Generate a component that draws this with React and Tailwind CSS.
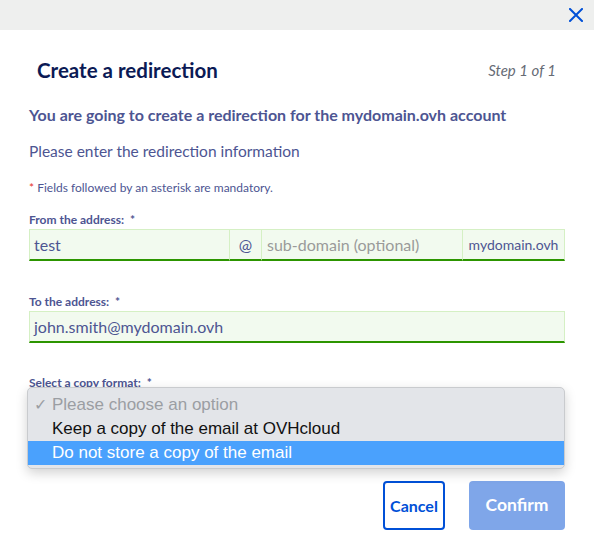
function Label({ children }) {
  return (
    <div className="text-[12px] font-bold text-[#4d5592] leading-[14px] mb-[2px] whitespace-pre">
      {children}:  *
    </div>
  );
}

function CloseIcon() {
  return (
    <svg width="14" height="14" viewBox="0 0 14 14" className="text-[#0050d7]">
      <path d="M1 1 L13 13 M13 1 L1 13" stroke="currentColor" strokeWidth="2" strokeLinecap="square" fill="none" />
    </svg>
  );
}

const seg = 'bg-[#f2faef] border border-[#d5f0c4] border-b-2 border-b-[#2c9500] flex items-center';

export default function App() {
  return (
    <div className="w-[594px] h-[551px] bg-white overflow-hidden font-['Lato','Noto_Sans',sans-serif]">
      <div className="h-[30px] bg-[#eeefee] flex justify-end items-center pr-[11px]">
        <CloseIcon />
      </div>

      <div className="px-[29px]">
        <div className="flex items-center justify-between pl-[8px] pr-[9px] mt-[28px] h-[24px]">
          <h1 className="text-[20.5px] font-bold text-[#0b1a55] leading-[24px]">Create a redirection</h1>
          <span className="text-[15px] italic text-[#666b75] leading-[20px]">Step 1 of 1</span>
        </div>

        <p className="mt-[23px] text-[16px] font-bold text-[#4d5592] leading-[20px] whitespace-nowrap">
          You are going to create a redirection for the mydomain.ovh account
        </p>
        <p className="mt-[16px] text-[15.5px] text-[#4d5592] leading-[20px]">
          Please enter the redirection information
        </p>
        <p className="mt-[20px] text-[12px] text-[#4d5592] leading-[14px]">
          <span className="text-[#e5332a]">*</span> Fields followed by an asterisk are mandatory.
        </p>

        <div className="mt-[18px]">
          <Label>From the address</Label>
          <div className="flex h-[32px] text-[16px]">
            <div className={`${seg} w-[201px] px-[4px] text-[#4d5592]`}>test</div>
            <div className={`${seg} w-[32px] border-l-0 justify-center text-[#4d5592]`}>@</div>
            <div className={`${seg} w-[201px] border-l-0 px-[5px] text-[#9a9a9a]`}>sub-domain (optional)</div>
            <div className={`${seg} flex-1 border-l-0 justify-center text-[14px] text-[#4d5592]`}>mydomain.ovh</div>
          </div>
        </div>

        <div className="mt-[34px]">
          <Label>To the address</Label>
          <div className={`${seg} h-[32px] px-[4px] text-[16px] text-[#4d5592]`}>
            john.smith@mydomain.ovh
          </div>
        </div>

        <div className="mt-[33px] relative">
          <Label>Select a copy format</Label>
          <div className="h-[32px] border border-[#d5f0c4] border-r-2 border-r-[#0050d7] bg-white" />

          <div className="absolute left-[-2px] right-0 top-[11px] h-[82px] bg-[#e3e5e9] rounded-[5px] border border-[#c9cbce] shadow-[0_4px_12px_rgba(0,0,0,0.18)] pt-[5px] font-['Liberation_Sans',sans-serif] text-[17px]">
            <div className="h-[24px] flex items-center text-[#9b9ea3]">
              <span className="w-[24px] pl-[6px] text-[16px]">✓</span>
              Please choose an option
            </div>
            <div className="h-[24px] flex items-center pl-[24px] text-[#111]">Keep a copy of the email at OVHcloud</div>
            <div className="h-[24px] flex items-center pl-[24px] text-white bg-[#4aa1fd]">Do not store a copy of the email</div>
          </div>
        </div>

        <div className="flex justify-end gap-[24px] mt-[57px]">
          <button className="w-[62px] h-[49px] border-2 border-[#0050d7] rounded-[4px] text-[16px] font-bold text-[#0050d7] bg-white">
            Cancel
          </button>
          <button className="w-[96px] h-[49px] rounded-[4px] bg-[#7fa6e9] text-[17.5px] font-bold text-white">
            Confirm
          </button>
        </div>
      </div>
    </div>
  );
}
